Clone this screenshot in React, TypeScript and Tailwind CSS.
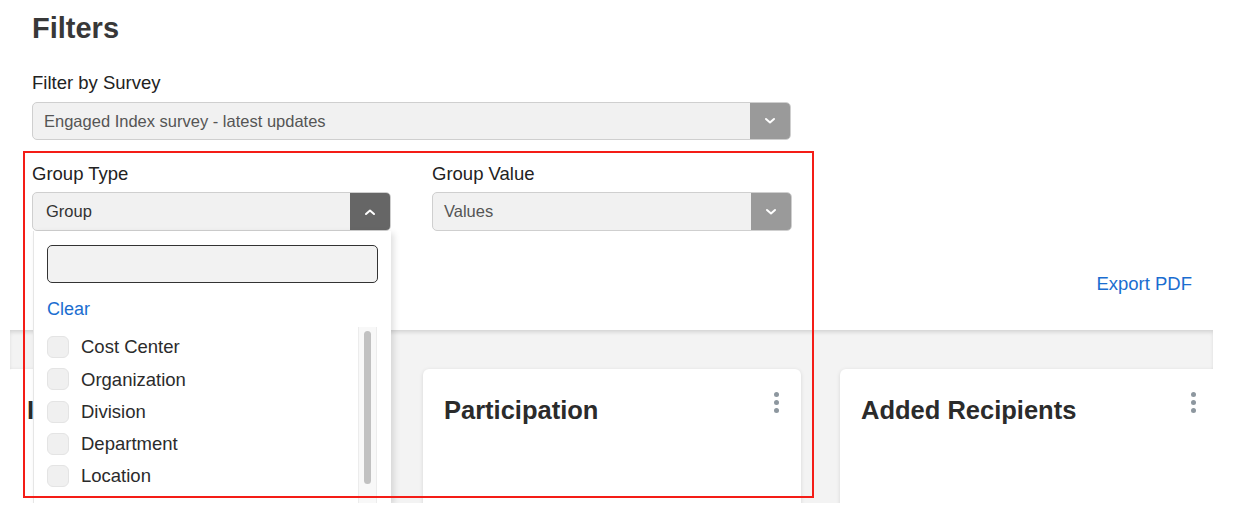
import React from "react";

const font = { fontFamily: '"Liberation Sans", Arial, sans-serif' };

function Chevron({ up = false }: { up?: boolean }) {
  return (
    <svg width="12" height="8" viewBox="0 0 12 8" fill="none">
      <polyline
        points={up ? "2,6 6,2.5 10,6" : "2,2 6,5.5 10,2"}
        stroke="white"
        strokeWidth="2"
        strokeLinecap="round"
        strokeLinejoin="round"
      />
    </svg>
  );
}

function Select({
  value,
  width,
  height,
  open = false,
}: {
  value: string;
  width: string;
  height: string;
  open?: boolean;
}) {
  return (
    <div
      className={`${width} ${height} flex rounded-[5px] border border-[#cfcfcf] bg-[#f1f1f1]`}
    >
      <div
        className={`flex flex-1 items-center text-[16.5px] ${
          open ? "pl-[13px] text-[#333]" : "pl-[11px] text-[#555]"
        }`}
      >
        {value}
      </div>
      <div
        className={`flex w-[40px] items-center justify-center rounded-r-[4px] ${
          open ? "bg-[#666666]" : "bg-[#9a9a9a]"
        }`}
      >
        <Chevron up={open} />
      </div>
    </div>
  );
}

function Kebab() {
  return (
    <div className="flex flex-col gap-[3px]">
      <span className="h-[5px] w-[5px] rounded-full bg-[#8d979f]" />
      <span className="h-[5px] w-[5px] rounded-full bg-[#8d979f]" />
      <span className="h-[5px] w-[5px] rounded-full bg-[#8d979f]" />
    </div>
  );
}

function Card({ title }: { title: string }) {
  return (
    <div className="h-[220px] rounded-[6px] bg-white shadow-[0_1px_4px_rgba(0,0,0,0.12)]">
      <div className="flex items-start justify-between pl-[21px] pr-[22px] pt-[23px]">
        <h2 className="text-[25.5px] font-bold leading-[36px] text-[#2b2b2b]">
          {title}
        </h2>
        <Kebab />
      </div>
    </div>
  );
}

const groups = ["Cost Center", "Organization", "Division", "Department", "Location"];

export default function App() {
  return (
    <div className="h-[524px] w-full bg-white" style={font}>
      <div className="relative h-[503px] w-full overflow-hidden">
        <div className="px-[32px]">
          <h1 className="mt-[10px] text-[29px] font-bold leading-[36px] text-[#383838]">
            Filters
          </h1>
          <div className="mt-[25px] text-[18.5px] leading-[24px] text-[#222]">
            Filter by Survey
          </div>
          <div className="mt-[7px]">
            <Select
              value="Engaged Index survey - latest updates"
              width="w-[759px]"
              height="h-[38px]"
            />
          </div>
          <div className="mt-[22px] flex gap-[41px]">
            <div>
              <div className="text-[18.5px] leading-[24px] text-[#222]">Group Type</div>
              <div className="mt-[6px]">
                <Select value="Group" width="w-[359px]" height="h-[39px]" open />
              </div>
            </div>
            <div>
              <div className="text-[18.5px] leading-[24px] text-[#222]">Group Value</div>
              <div className="mt-[6px]">
                <Select value="Values" width="w-[360px]" height="h-[39px]" />
              </div>
            </div>
          </div>
          <div className="mt-[41px] flex justify-end pr-[33px]">
            <span className="text-[18.5px] leading-[24px] text-[#1a6dd0]">Export PDF</span>
          </div>
        </div>

        <div className="ml-[10px] mt-[34px] h-[200px] w-[1203px] overflow-hidden bg-[#f3f3f3] pt-[39px] shadow-[inset_0_3px_4px_-1px_rgba(0,0,0,0.14)]">
          <div className="-ml-[4px] grid w-[1212px] grid-cols-[378px_378px_378px] gap-[39px]">
            <Card title="Invitations" />
            <Card title="Participation" />
            <Card title="Added Recipients" />
          </div>
        </div>

        {/* open dropdown menu */}
        <div className="absolute left-[33px] top-[231px] h-[272px] w-[358px] border-l border-[#e6e6e6] bg-white shadow-[3px_2px_6px_rgba(0,0,0,0.12)]">
          <div className="px-[13px] pt-[14px]">
            <div className="h-[38px] rounded-[5px] border border-[#333] bg-[#f2f2f2]" />
            <div className="mt-[14px] text-[18px] leading-[24px] text-[#1a6dd0]">Clear</div>
          </div>
          <div className="mt-[6px] flex">
            <div className="flex-1 pl-[13px] pt-[4px]">
              {groups.map((g) => (
                <div key={g} className="flex h-[32.3px] items-center gap-[12px]">
                  <span className="h-[22px] w-[22px] rounded-[6px] border border-[#e4e4e4] bg-[#f0f0f0]" />
                  <span className="text-[18.5px] text-[#2b2b2b]">{g}</span>
                </div>
              ))}
            </div>
            <div className="mr-[14px] h-[200px] w-[19px] border-x border-[#ececec] bg-[#f8f8f8] px-[5px] pt-[4px]">
              <div className="h-[153px] rounded-full bg-[#c1c1c1]" />
            </div>
          </div>
        </div>

        {/* highlight annotation */}
        <div className="pointer-events-none absolute left-[23px] top-[151px] h-[347px] w-[791px] border-2 border-[#f41d17]" />
      </div>
    </div>
  );
}
